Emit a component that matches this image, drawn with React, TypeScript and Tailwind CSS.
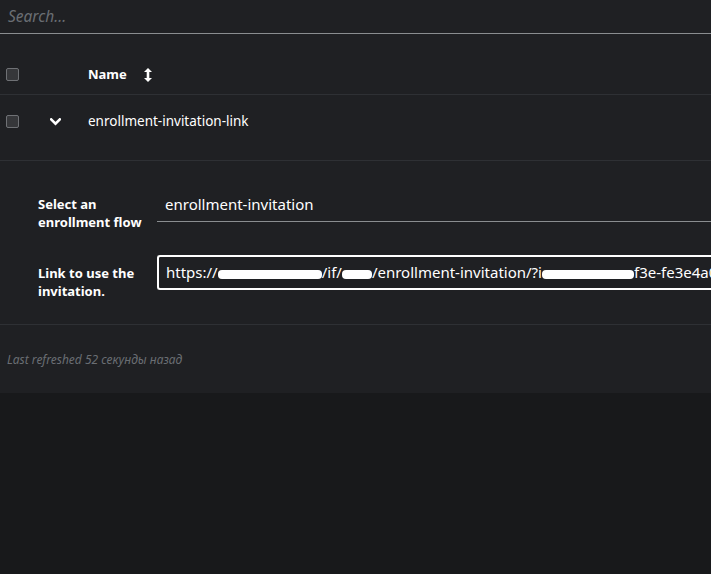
import React from "react";

function Checkbox() {
  return (
    <span className="block h-[13px] w-[13px] rounded-[2px] border border-[#6f7175] bg-[#36373a]" />
  );
}

function SortIcon() {
  return (
    <svg width="8" height="14" viewBox="0 0 8 14" className="text-white">
      <path d="M4 0 L8 4 H5.3 V10 H8 L4 14 L0 10 H2.7 V4 H0 Z" fill="currentColor" />
    </svg>
  );
}

function ChevronDown() {
  return (
    <svg width="11" height="8" viewBox="0 0 11 8">
      <path d="M1.2 1.4 L5.5 5.6 L9.8 1.4" fill="none" stroke="white" strokeWidth="2.6" strokeLinecap="square" />
    </svg>
  );
}

// white redaction marks painted over the url in the screenshot
function Scribble({ w }: { w: number }) {
  return <span className="inline-block h-[9px] shrink-0 translate-y-[1px] rounded-sm bg-white align-middle" style={{ width: w }} />;
}

export default function App() {
  return (
    <div className="min-h-[574px] overflow-hidden bg-[#18191b] font-['Noto_Sans',sans-serif] text-white">
      <div className="h-[393px] overflow-hidden bg-[#1f2023]">
        <div className="flex h-[34px] items-center border-b border-[#8a8d90] px-2">
          <span className="text-[15.5px] italic text-[#6a6e73]">Search...</span>
        </div>

        <div className="mt-[21px] flex h-[40px] items-center border-b border-[#2e3034]">
          <div className="w-[88px] pl-[6px]">
            <Checkbox />
          </div>
          <span className="text-[13px] font-bold">Name</span>
          <span className="ml-[17px] flex items-center">
            <SortIcon />
          </span>
        </div>

        <div className="flex h-[66px] items-center border-b border-[#2e3034] pb-[13px]">
          <div className="w-[50px] pl-[6px]">
            <Checkbox />
          </div>
          <div className="w-[38px] pt-[1px]">
            <ChevronDown />
          </div>
          <span className="text-[13.5px]">enrollment-invitation-link</span>
        </div>

        <div className="border-b border-[#2e3034] pt-[31px] pb-[24px]">
          <div className="flex items-start">
            <div className="w-[157px] pl-[38px] pt-[3px] text-[13px] font-bold leading-[18px]">
              Select an
              <br />
              enrollment flow
            </div>
            <div className="flex-1 border-b border-[#8a8d90] pb-[7px] pl-[8px] pt-[2px] text-[15px] leading-[20px]">
              enrollment-invitation
            </div>
          </div>
          <div className="mt-[24px] flex items-start">
            <div className="w-[157px] pl-[38px] pt-[9px] text-[13px] font-bold leading-[18px]">
              Link to use the
              <br />
              invitation.
            </div>
            <div className="h-[35px] min-w-0 flex-1 overflow-hidden whitespace-nowrap rounded-l-[3px] border-y-2 border-l-2 border-white pl-[7px] text-[15px] leading-[31px]">
              https://
              <Scribble w={104} />
              /if/
              <Scribble w={30} />
              /enrollment-invitation/?i
              <Scribble w={92} />
              f3e-fe3e4a0c21
            </div>
          </div>
        </div>

        <div className="pl-[7px] pt-[26px] text-[12px] italic text-[#6a6e73]">
          Last refreshed 52 секунды назад
        </div>
      </div>
    </div>
  );
}
